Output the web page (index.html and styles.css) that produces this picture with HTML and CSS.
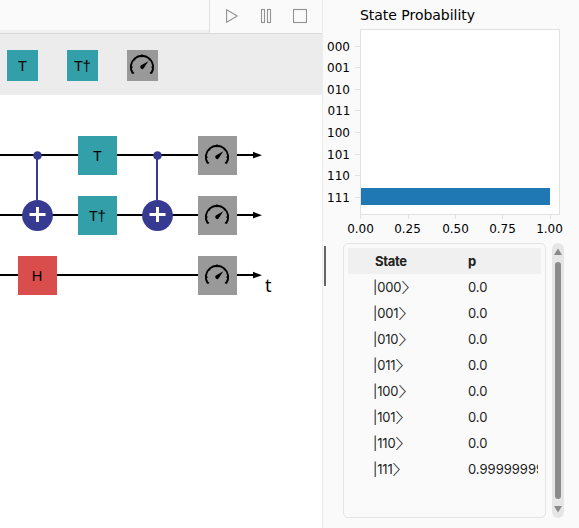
FILE: index.html
```html
<!DOCTYPE html>
<html lang="en">
<head>
<meta charset="utf-8">
<title>Quantum circuit simulator</title>
<link rel="stylesheet" href="styles.css">
</head>
<body>
<svg width="0" height="0" class="defs" aria-hidden="true">
  <defs>
    <g id="gauge" fill="none" stroke="#000">
      <path d="M-9.2 7.4A11.2 11.2 0 1 1 9.2 7.4" stroke-width="1.9"/>
      <path d="M0-11.5V-8.8M-11.5 1.2H-9.3M11.5 1.2H9.3M-8-7l1.2 1.2M8-7L6.8-5.8M-9.4 7.5l1.5-1M9.4 7.5l-1.5-1" stroke-width="1.3"/>
      <path d="M6.3-4.8L1.9 2.1A2 2 0 1 1-1.2-.4Z" fill="#000" stroke="none"/>
    </g>
    <g id="cnot">
      <path d="M0 0V45" stroke="#363a91" stroke-width="2"/>
      <circle cx=".5" cy=".5" r="4.3" fill="#363a91"/>
      <circle cx=".5" cy="60.5" r="15.4" fill="#363a91"/>
      <path d="M-7.5 59.5H8.5M.5 52V67" stroke="#fff" stroke-width="3"/>
    </g>
    <g id="measure"><rect width="39" height="39" fill="#999"/><use href="#gauge" x="19" y="20"/></g>
    <path id="arrow" d="M0-3.2L9 .3L0 3.4Z"/>
  </defs>
</svg>
<div class="app">
  <main class="editor">
    <header class="toolbar">
      <div class="tabs"></div>
      <div class="controls">
        <svg width="14" height="16" viewBox="0 0 14 16"><path d="M1.6 1.8V14.2L12.2 8Z"/></svg>
        <svg width="12" height="16" viewBox="0 0 12 16"><rect x="1.5" y="1.5" width="3" height="13"/><rect x="7.5" y="1.5" width="3" height="13"/></svg>
        <svg width="14" height="16" viewBox="0 0 14 16"><rect x=".5" y="1.5" width="13" height="13"/></svg>
      </div>
    </header>
    <div class="palette">
      <div class="gate">T</div>
      <div class="gate">T<span class="dagger">†</span></div>
      <div class="gate gray"><svg width="31" height="31"><use href="#gauge" x="15" y="16"/></svg></div>
    </div>
    <svg class="circuit" width="322" height="433" viewBox="0 95 322 433">
      <path d="M0 155H254M0 215H254M0 275H254" stroke="#000" stroke-width="2"/>
      <use href="#arrow" x="253" y="155"/><use href="#arrow" x="253" y="215"/><use href="#arrow" x="253" y="275"/>
      <use href="#cnot" x="37" y="155"/><use href="#cnot" x="157" y="155"/>
      <rect x="78" y="136" width="39" height="39" fill="#329fa9"/>
      <rect x="78" y="196" width="39" height="39" fill="#329fa9"/>
      <rect x="18" y="256" width="39" height="39" fill="#d94d4c"/>
      <use href="#measure" x="198" y="136"/><use href="#measure" x="198" y="196"/><use href="#measure" x="198" y="256"/>
      <g class="gate-label"><text x="97.5" y="161">T</text><text x="97.5" y="221">T<tspan class="dagger">†</tspan></text><text x="37" y="281">H</text></g>
      <text class="axis-name" x="265" y="292">t</text>
    </svg>
  </main>
  <aside class="results">
    <svg class="chart" width="256" height="240" viewBox="323 0 256 240">
      <text class="title" x="360" y="20" textLength="115">State Probability</text>
      <rect x="360.5" y="29.5" width="199" height="185" fill="#fff" stroke="#e1e1e1"/>
      <path d="M355 46.5h5M355 67.5h5M355 89.5h5M355 110.5h5M355 132.5h5M355 154.5h5M355 175.5h5M355 197.5h5M360.5 215v4M408.5 215v4M455.5 215v4M502.5 215v4M550.5 215v4" stroke="#e1e1e1"/>
      <rect x="361" y="188" width="189" height="17" fill="#1f77b4"/>
      <g text-anchor="end">
        <text x="350" y="51">000</text><text x="350" y="72">001</text><text x="350" y="94">010</text><text x="350.5" y="115">011</text>
        <text x="350" y="137">100</text><text x="350" y="159">101</text><text x="350" y="180">110</text><text x="350" y="202">111</text>
      </g>
      <g text-anchor="middle">
        <text x="360.5" y="233">0.00</text><text x="407.5" y="233">0.25</text><text x="455.5" y="233">0.50</text><text x="502.5" y="233">0.75</text><text x="549.5" y="233">1.00</text>
      </g>
    </svg>
    <div class="lower">
      <div class="handle"></div>
      <section class="states">
        <div class="row head"><span>State</span><span>p</span></div>
        <div class="row"><span class="ket">|000<i>〉</i></span><span>0.0</span></div>
        <div class="row"><span class="ket">|001<i>〉</i></span><span>0.0</span></div>
        <div class="row"><span class="ket">|010<i>〉</i></span><span>0.0</span></div>
        <div class="row"><span class="ket">|011<i>〉</i></span><span>0.0</span></div>
        <div class="row"><span class="ket">|100<i>〉</i></span><span>0.0</span></div>
        <div class="row"><span class="ket">|101<i>〉</i></span><span>0.0</span></div>
        <div class="row"><span class="ket">|110<i>〉</i></span><span>0.0</span></div>
        <div class="row"><span class="ket">|111<i>〉</i></span><span>0.999999999</span></div>
      </section>
      <svg class="scroll" width="12" height="275" viewBox="0 0 12 275">
        <rect width="12" height="275" rx="6" fill="#e6e6e6"/>
        <path d="M6 5.5L10 12H2ZM6 269.5L10 263H2Z" fill="#8b8b8b"/>
        <rect x="3" y="19" width="6" height="237" rx="3" fill="#8b8b8b"/>
      </svg>
    </div>
  </aside>
</div>
</body>
</html>
```
FILE: styles.css
```css
* { box-sizing: border-box; }
body { margin: 0; background: #fafafa; font-family: "DejaVu Sans", sans-serif; }
svg { display: block; flex: none; }
.defs { position: absolute; }
.app { display: grid; grid-template-columns: 323px 256px; height: 528px; overflow: hidden; }
.editor { border-right: 1px solid #ececec; background: #fff; overflow: hidden; }
.toolbar { display: flex; height: 34px; border-bottom: 1px solid #dadada; background: #fafafa; }
.tabs { width: 209px; border-bottom: 3px solid #f0f0f0; }
.controls { display: flex; flex: 1; align-items: center; gap: 21px; padding: 0 0 1px 15px; border-left: 1px solid #dfdfdf; }
.controls svg { fill: none; stroke: #929292; stroke-width: 1.1; }
.palette { display: flex; gap: 29px; height: 61px; padding: 16px 7px; background: #ececec; }
.gate { width: 31px; height: 31px; background: #329fa9; font: 15px/31px "Noto Sans", sans-serif; text-align: center; }
.gray { background: #999; }
.gate-label { font: 15px "Noto Sans", sans-serif; text-anchor: middle; }
.dagger { font-family: "Liberation Sans", sans-serif; line-height: 1; }
.axis-name { font: 18px "Noto Sans", sans-serif; }
.chart { font-size: 12px; fill: #000; }
.title { font-size: 14px; }
.lower { display: flex; padding: 3px 15px 0 1px; }
.handle { width: 2px; height: 40px; margin: 3px 17px 0 0; background: #666; }
.states { width: 203px; height: 275px; padding: 4px; border: 1px solid #e5e5e5; border-radius: 5px; margin-right: 6px; }
.row { display: grid; grid-template-columns: 93px 70px; height: 26px; padding-left: 27px; font: 13px/26px Inter, sans-serif; color: #212121; }
.row span { white-space: nowrap; overflow: hidden; }
.row .ket { margin-left: -2px; letter-spacing: -0.15px; }
.row i { display: inline-block; margin-left: -0.5px; font: 300 14px/20px "Noto Sans CJK JP", sans-serif; transform: scaleX(1.4); transform-origin: 0 50%; }
.head { background: #f0f0f0; font-weight: 700; letter-spacing: -0.3px; }
```
